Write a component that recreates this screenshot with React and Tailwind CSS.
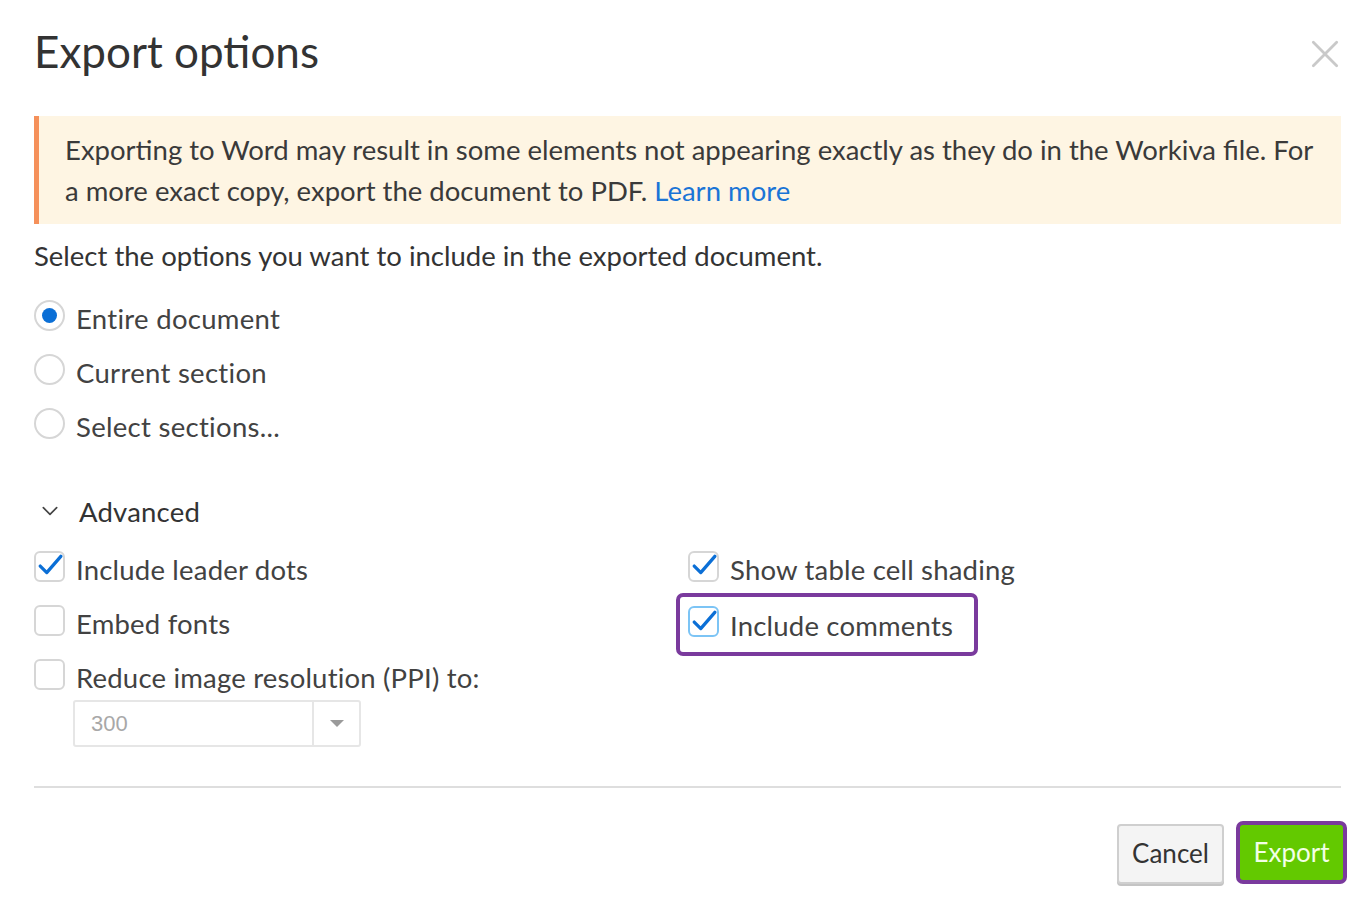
import React, { useState } from "react";

const font = { fontFamily: "Lato, 'Open Sans', sans-serif" };

function Radio({ checked, label, onSelect }) {
  return (
    <label onClick={onSelect} className="flex items-center h-[54px] cursor-pointer">
      <span className="w-[31px] h-[31px] rounded-full border-2 border-[#d6d6d6] bg-white flex items-center justify-center -mt-[8px]">
        {checked && <span className="w-[15px] h-[15px] rounded-full bg-[#0b6fd6]" />}
      </span>
      <span className="ml-[11px] text-[27.5px] text-[#424242] tracking-[0.3px]">{label}</span>
    </label>
  );
}

function Check({ checked, label, focus }) {
  return (
    <div className="flex items-center h-[54px]">
      <span
        className={`w-[31px] h-[31px] rounded-[6px] border-2 bg-white flex items-center justify-center -mt-[8px] ${
          focus ? "border-[#7cc4f5]" : "border-[#d6d6d6]"
        }`}
      >
        {checked && (
          <svg viewBox="0 0 24 24" className="w-[26px] h-[26px] -mt-[2px]" fill="none" stroke="#0b6fd6" strokeWidth="3" strokeLinecap="round" strokeLinejoin="round">
            <path d="M3 13l6 6L22 4" />
          </svg>
        )}
      </span>
      <span className="ml-[11px] text-[27.5px] text-[#424242] tracking-[0.2px] whitespace-nowrap">{label}</span>
    </div>
  );
}

export default function App() {
  const [range, setRange] = useState("entire");

  return (
    <div style={font} className="w-[1369px] h-[918px] bg-white relative overflow-hidden">
      <div className="pl-[34px] pr-[28px]">
        <header className="flex items-center justify-between h-[106px] pt-[2px]">
          <h1 className="text-[44px] text-[#333] leading-none -mt-[6px]">Export options</h1>
          <svg viewBox="0 0 24 24" className="w-[28px] h-[28px] mr-[2px]" fill="none" stroke="#c9c9c9" strokeWidth="2.4" strokeLinecap="round">
            <path d="M2 2l20 20M22 2L2 22" />
          </svg>
        </header>

        <div className="w-[1307px] border-l-[5px] border-[#f5905a] bg-[#fef5e3] pl-[26px] pr-[8px] pt-[13px] pb-[13px] text-[27.5px] leading-[41px] text-[#3a3a3a] mt-[10px]">
          Exporting to Word may result in some elements not appearing exactly as they do in the Workiva file. For a more exact copy, export the document to PDF.{" "}
          <span className="text-[#1a74d6]">Learn more</span>
        </div>

        <p className="text-[27.5px] text-[#333] mt-[12px] leading-[40px]">
          Select the options you want to include in the exported document.
        </p>

        <div className="mt-[16px] flex flex-col">
          <Radio checked={range === "entire"} label="Entire document" onSelect={() => setRange("entire")} />
          <Radio checked={range === "current"} label="Current section" onSelect={() => setRange("current")} />
          <Radio checked={range === "select"} label="Select sections..." onSelect={() => setRange("select")} />
        </div>

        <div className="flex items-center mt-[31px] h-[54px]">
          <svg viewBox="0 0 24 24" className="w-[20px] h-[20px] ml-[6px] -mt-[2px]" fill="none" stroke="#444" strokeWidth="2" strokeLinecap="round" strokeLinejoin="round">
            <path d="M4 8l8 8 8-8" />
          </svg>
          <span className="ml-[19px] text-[27.5px] text-[#333] tracking-[0.2px]">Advanced</span>
        </div>

        <div className="grid grid-cols-[654px_1fr] mt-[4px]">
          <div className="flex flex-col">
            <Check checked label="Include leader dots" />
            <Check label="Embed fonts" />
            <Check label="Reduce image resolution (PPI) to:" />
            <div className="ml-[39px] mt-[-5px] w-[288px] h-[47px] border-2 border-[#e6e6e6] rounded-[3px] flex">
              <span className="flex-1 flex items-center pl-[16px] text-[22px] text-[#a8a8a8]" style={{ fontFamily: "'Liberation Sans', Arial, sans-serif" }}>
                300
              </span>
              <span className="w-[47px] border-l-2 border-[#e6e6e6] flex items-center justify-center">
                <svg viewBox="0 0 12 6" className="w-[14px] h-[7px]" fill="#9a9a9a">
                  <path d="M0 0h12L6 6z" />
                </svg>
              </span>
            </div>
          </div>
          <div className="flex flex-col">
            <Check checked label="Show table cell shading" />
            <div className="-ml-[12px] w-[302px] h-[63px] -mt-[4px] border-[4px] border-[#7a3a9d] rounded-[7px] flex items-center pl-[8px] pt-[2px]">
              <Check checked focus label="Include comments" />
            </div>
          </div>
        </div>

        <div className="mt-[39px] w-[1307px] h-[2px] bg-[#dedede]" />

        <div className="flex justify-end items-center mt-[33px] gap-[12px] -mr-[6px]">
          <button className="h-[60px] w-[107px] rounded-[4px] border-2 border-[#cfcfcf] bg-[#f4f4f4] shadow-[0_2px_0_#c4c4c4] text-[26px] text-[#333]">
            Cancel
          </button>
          <button className="h-[63px] w-[111px] rounded-[7px] border-[4px] border-[#7a3a9d] bg-[#63c900] text-[26px] text-[#f2ffe6] mb-[2px]">
            Export
          </button>
        </div>
      </div>
    </div>
  );
}
